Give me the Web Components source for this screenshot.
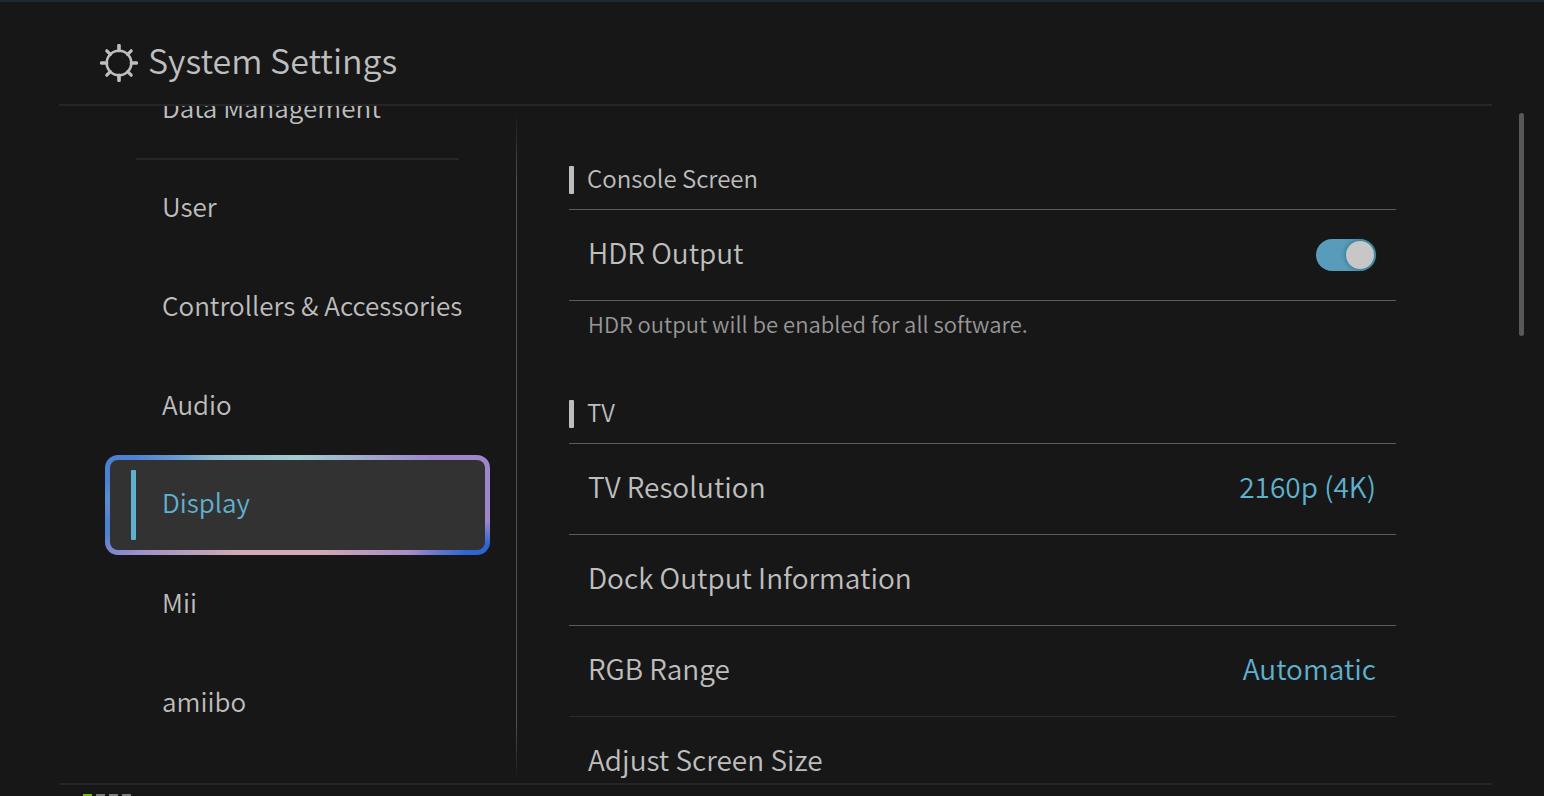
<!DOCTYPE html>
<html lang="en">
<head>
<meta charset="utf-8">
<meta name="viewport" content="width=device-width, initial-scale=1">
<title>System Settings</title>
<style>
  :root {
    --bg: #171717;
    --text: #bebebe;
    --muted: #979797;
    --accent: #5eb1cf;
    --line: #5b5b5b;
    --faint: #252525;
  }
  body {
    margin: 0;
    background: var(--bg);
    color: var(--text);
    font: 350 26px/40px "Noto Sans CJK JP", "Noto Sans", sans-serif;
  }
</style>
</head>
<body>
<settings-app>
  <settings-header slot="header">System Settings</settings-header>
  <settings-nav slot="nav">
    <nav-item>Data Management</nav-item>
    <nav-divider></nav-divider>
    <nav-item>User</nav-item>
    <nav-item>Controllers &amp; Accessories</nav-item>
    <nav-item>Audio</nav-item>
    <nav-item selected>Display</nav-item>
    <nav-item>Mii</nav-item>
    <nav-item>amiibo</nav-item>
  </settings-nav>
  <settings-group heading="Console Screen">
    <toggle-row label="HDR Output"></toggle-row>
    <settings-note>HDR output will be enabled for all software.</settings-note>
  </settings-group>
  <settings-group heading="TV">
    <settings-row value="2160p (4K)">TV Resolution</settings-row>
    <settings-row>Dock Output Information</settings-row>
    <settings-row value="Automatic" faint>RGB Range</settings-row>
    <settings-row>Adjust Screen Size</settings-row>
  </settings-group>
  <player-lights slot="footer"></player-lights>
</settings-app>

<script>
function define(name, html, setup) {
  const template = document.createElement('template');
  template.innerHTML = html;
  customElements.define(name, class extends HTMLElement {
    connectedCallback() {
      if (this.shadowRoot) return;
      this.attachShadow({ mode: 'open' }).append(template.content.cloneNode(true));
      if (setup) setup(this, this.shadowRoot);
    }
  });
}

define('settings-app', `
  <style>
    :host {
      display: grid;
      grid-template-rows: auto minmax(0, 1fr) auto;
      height: 100vh;
      box-sizing: border-box;
      border-top: 2px solid #1c2835;
      overflow: hidden;
    }
    header { margin: 0 52px 0 59px; border-bottom: 2px solid var(--faint); }
    .body { display: grid; grid-template-columns: 457px 1px minmax(0, 1fr) auto; margin: 0 20px 0 59px; min-height: 0; }
    .split { margin: 6px 0 4px; background: linear-gradient(transparent, #505050 10%, #505050 92%, transparent); }
    aside, main { overflow: hidden; min-height: 0; }
    main { padding: 42px 123px 0 52px; }
    .thumb { width: 5px; height: 33%; margin-top: 7px; border-radius: 3px; background: #585858; }
    footer { margin: 0 52px 0 59px; border-top: 2px solid var(--faint); }
  </style>
  <header><slot name="header"></slot></header>
  <div class="body">
    <aside><slot name="nav"></slot></aside>
    <div class="split"></div>
    <main><slot></slot></main>
    <div class="thumb"></div>
  </div>
  <footer><slot name="footer"></slot></footer>
`);

define('settings-header', `
  <style>
    :host { display: flex; align-items: center; gap: 10px; height: 102px; padding: 14px 0 0 41px; box-sizing: border-box; }
    svg { width: 38px; height: 38px; flex: none; margin-top: 6px; }
    h1 { margin: 0; font-size: 34px; line-height: 48px; font-weight: inherit; }
  </style>
  <svg viewBox="0 0 38 38" fill="none" stroke="#bebebe" stroke-width="2.6" aria-hidden="true">
    <circle cx="19" cy="19" r="12.3"/>
    <path stroke-width="3.6" stroke-linecap="round" d="M19 1.6v5M19 31.4v5M1.6 19h5M31.4 19h5"/>
    <path stroke-width="3.2" stroke-linecap="round" d="M6.8 6.8l3.6 3.6M27.6 27.6l3.6 3.6M6.8 31.2l3.6-3.6M27.6 10.4l3.6-3.6"/>
  </svg>
  <h1><slot></slot></h1>
`);

define('settings-nav', `
  <style>
    :host { display: block; }
    nav { display: flex; flex-direction: column; margin: -46px 26px 0 46px; }
  </style>
  <nav aria-label="Settings"><slot></slot></nav>
`);

define('nav-item', `
  <style>
    :host { display: block; }
    button {
      display: flex; align-items: center; width: 100%; height: 99px; padding: 0 0 0 57px; box-sizing: border-box;
      border: 0; background: none; color: inherit; font: inherit; text-align: left; white-space: nowrap; cursor: pointer;
    }
    span { padding-bottom: 6px; }
    :host([selected]) { margin-top: -1px; }
    :host([selected]) button {
      height: 100px;
      padding: 0 0 0 21px;
      gap: 26px;
      border: 5px solid transparent;
      border-radius: 13px;
      color: var(--accent);
      background:
        linear-gradient(#323232, #323232) padding-box,
        radial-gradient(80px 34px at 100% 100%, #2d66d2 30%, transparent) border-box,
        radial-gradient(110px 60px at 0 10%, #4b80d2 25%, transparent) border-box,
        radial-gradient(60px 30px at 0 72%, #4b80d2 20%, transparent) border-box,
        linear-gradient(90deg, #6f9dcc, #a3cdcf 50%, #9d86cb 85%) 0 0 / 100% 50px no-repeat border-box,
        linear-gradient(90deg, #8a88cf, #d3aab5 35%, #d3aab5 55%, #9d86cb 85%) 0 100% / 100% 50px no-repeat border-box;
    }
    :host([selected]) button::before { content: ""; width: 5px; height: 70px; background: var(--accent); border-radius: 1px; }
  </style>
  <button type="button"><span><slot></slot></span></button>
`, (host, root) => {
  if (host.hasAttribute('selected')) root.querySelector('button').setAttribute('aria-current', 'page');
});

define('nav-divider', `
  <style>:host { display: block; height: 2px; margin: -1px 31px -1px 31px; background: var(--faint); }</style>
`);

define('settings-group', `
  <style>
    :host { display: block; margin-bottom: 34px; }
    header { display: flex; align-items: center; gap: 13px; height: 59px; padding-top: 2px; border-bottom: 1px solid var(--line); }
    header::before { content: ""; width: 5px; height: 28px; border-radius: 1px; background: #bdbdbd; }
    h2 { margin: 0; padding-bottom: 4px; font-size: 24px; line-height: 40px; font-weight: inherit; }
  </style>
  <section><header><h2></h2></header><slot></slot></section>
`, (host, root) => { root.querySelector('h2').textContent = host.getAttribute('heading'); });

define('toggle-row', `
  <style>
    :host { display: block; border-bottom: 1px solid var(--line); }
    label { display: flex; align-items: center; justify-content: space-between; height: 90px; padding: 0 20px 0 19px; font-size: 28px; cursor: pointer; }
    span { padding-bottom: 6px; }
    input {
      appearance: none; display: flex; align-items: center; justify-content: flex-end;
      width: 60px; height: 32px; margin: 0; padding: 0 2px; box-sizing: border-box; border-radius: 16px; background: #589bba; cursor: pointer;
    }
    input::before { content: ""; width: 28px; height: 28px; border-radius: 50%; background: #c7c7c7; box-shadow: 0 0 5px #0f4a66aa; }
    input:not(:checked) { justify-content: flex-start; background: #555; }
  </style>
  <label><span></span><input type="checkbox" role="switch" checked></label>
`, (host, root) => { root.querySelector('span').textContent = host.getAttribute('label'); });

define('settings-note', `
  <style>:host { display: block; padding: 2px 19px 5px; color: var(--muted); font-size: 22px; line-height: 40px; }</style>
  <slot></slot>
`);

define('settings-row', `
  <style>
    :host { display: block; border-bottom: 1px solid var(--line); }
    :host([faint]) { border-color: #2c2c2c; }
    button {
      display: flex; align-items: center; justify-content: space-between; width: 100%; height: 90px; padding: 0 20px 0 19px;
      border: 0; background: none; color: inherit; font: inherit; font-size: 28px; text-align: left; cursor: pointer;
    }
    span { padding-bottom: 6px; }
    .value { color: var(--accent); }
  </style>
  <button type="button"><span><slot></slot></span><span class="value"></span></button>
`, (host, root) => { root.querySelector('.value').textContent = host.getAttribute('value') || ''; });

define('player-lights', `
  <style>
    :host { display: flex; gap: 4px; height: 2px; padding: 9px 0 0 24px; }
    i { width: 9px; height: 9px; background: #7d7d7d; }
    i:first-of-type { background: #79b916; }
  </style>
  <i></i><i></i><i></i><i></i>
`);
</script>
</body>
</html>
